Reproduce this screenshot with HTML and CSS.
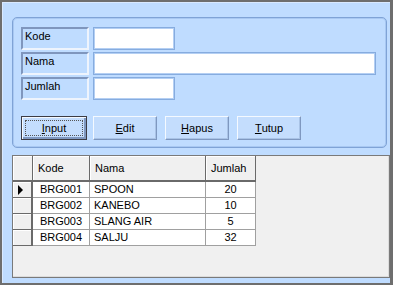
FILE: index.html
```html
<!DOCTYPE html>
<html>
<head>
<meta charset="utf-8">
<link rel="stylesheet" href="styles.css">
</head>
<body>
<div class="window">
  <div class="group">
    <div class="form">
      <div class="lbl">Kode</div><input class="txt short" type="text">
      <div class="lbl">Nama</div><input class="txt long" type="text">
      <div class="lbl">Jumlah</div><input class="txt short" type="text">
    </div>
    <div class="buttons">
      <button class="btn default"><span class="focus"><u>I</u>nput</span></button>
      <button class="btn"><u>E</u>dit</button>
      <button class="btn wide-gap"><u>H</u>apus</button>
      <button class="btn wide-gap"><u>T</u>utup</button>
    </div>
  </div>
  <div class="grid">
    <div class="table">
      <div class="hc rh"></div><div class="hc">Kode</div><div class="hc">Nama</div><div class="hc">Jumlah</div>
      <div class="rc"><span class="arrow"></span></div><div class="dc c">BRG001</div><div class="dc">SPOON</div><div class="dc c">20</div>
      <div class="rc"></div><div class="dc c">BRG002</div><div class="dc">KANEBO</div><div class="dc c">10</div>
      <div class="rc"></div><div class="dc c">BRG003</div><div class="dc">SLANG AIR</div><div class="dc c">5</div>
      <div class="rc"></div><div class="dc c">BRG004</div><div class="dc">SALJU</div><div class="dc c">32</div>
    </div>
  </div>
</div>
</body>
</html>
```
FILE: styles.css
```css
* { box-sizing: border-box; }
html, body { margin: 0; padding: 0; background: #ffffff; }
body { font-family: "Liberation Sans", Arial, sans-serif; font-size: 11px; color: #000; }

.window {
  width: 393px;
  height: 285px;
  background: #bfdcff;
  border: 2px solid #6e6e6e;
  border-right-width: 3px;
  padding: 15px 0 0 10px;
  box-shadow: inset 1px 1px 0 #d9e9ff;
}

.group {
  width: 375px;
  height: 131px;
  border: 1px solid #7fa3d6;
  box-shadow: inset 0 0 0 1px #a8c8f2;
  border-radius: 5px;
  padding: 9px 0 0 8px;
}

.form {
  display: grid;
  grid-template-columns: 68px auto;
  grid-auto-rows: 23px;
  row-gap: 2px;
  column-gap: 4px;
  align-items: stretch;
}

.lbl {
  border: 2px solid;
  border-color: #7f96bd #eef4fd #eef4fd #7f96bd;
  padding: 1px 0 0 2px;
  line-height: 13px;
}

.txt {
  height: 23px;
  border: 1px solid #86acdf;
  box-shadow: inset 0 0 0 1px #b4cff3;
  background: #fff;
  margin: 0;
  padding: 0;
  outline: none;
}
.short { width: 82px; }
.long { width: 283px; }

.buttons {
  display: flex;
  margin-top: 16px;
}

.btn {
  width: 64px;
  height: 24px;
  margin: 0 0 0 6px;
  padding: 0;
  background: #c4ddfd;
  border: 1px solid;
  border-color: #f4f9ff #7f98c0 #7f98c0 #f4f9ff;
  box-shadow: inset -1px -1px 0 #a9c3e6;
  font-family: "Liberation Sans", Arial, sans-serif;
  font-size: 11px;
  color: #000;
  display: flex;
  align-items: center;
  justify-content: center;
}
.btn.wide-gap { margin-left: 8px; }
.btn.default {
  width: 66px;
  margin-left: 0;
  border: 1px solid #3c3c44;
  box-shadow: inset 1px 1px 0 #f4f9ff, inset -2px -2px 0 #7f98c0;
}
.focus {
  display: flex;
  align-items: center;
  justify-content: center;
  width: 58px;
  height: 16px;
  border: 1px dotted #555;
}

.grid {
  width: 378px;
  height: 123px;
  margin-top: 7px;
  background: #f0f0f0;
  border: 1px solid #7a7a7a;
  box-shadow: inset -1px -1px 0 #dcdcdc;
}

.table {
  display: grid;
  grid-template-columns: 20px 57px 116px 50px;
  grid-template-rows: 26px;
  grid-auto-rows: 16px;
  width: 243px;
}

.hc {
  background: #f0f0f0;
  border-right: 1px solid #6a6a6a;
  border-bottom: 2px solid #6a6a6a;
  box-shadow: inset 1px 1px 0 #ffffff;
  display: flex;
  align-items: center;
  padding-left: 5px;
}

.rc {
  background: #f0f0f0;
  border-right: 2px solid #6a6a6a;
  border-bottom: 1px solid #6a6a6a;
  box-shadow: inset 1px 1px 0 #ffffff;
  display: flex;
  align-items: center;
  padding-left: 5px;
}

.arrow {
  width: 0;
  height: 0;
  border-left: 5px solid #000;
  border-top: 5px solid transparent;
  border-bottom: 5px solid transparent;
}

.dc {
  background: #ffffff;
  border-right: 1px solid #a0a0a0;
  border-bottom: 1px solid #a0a0a0;
  display: flex;
  align-items: center;
  padding-left: 4px;
  line-height: 13px;
  white-space: nowrap;
}
.dc.c { justify-content: center; padding-left: 0; }
```
